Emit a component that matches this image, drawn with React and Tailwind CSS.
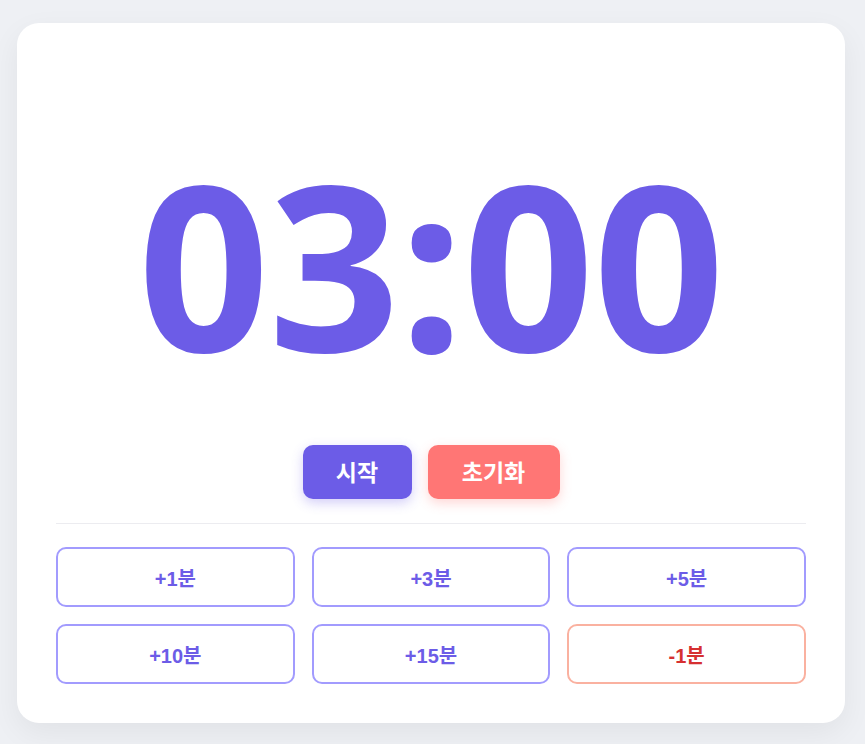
import React from "react";

const presets = [
  { label: "+1분", neg: false },
  { label: "+3분", neg: false },
  { label: "+5분", neg: false },
  { label: "+10분", neg: false },
  { label: "+15분", neg: false },
  { label: "-1분", neg: true },
];

export default function App() {
  return (
    <div
      className="h-[744px] w-full bg-[#eef0f4] pt-[23px] pl-[17px]"
      style={{ fontFamily: '"Noto Sans", "Noto Sans CJK KR", sans-serif' }}
    >
      <div className="w-[828px] h-[700px] bg-white rounded-[22px] shadow-[0_10px_30px_rgba(0,0,0,0.06)] px-[39px] pb-[39px] flex flex-col">
        <div className="flex-1 flex items-center justify-center pt-[58px]">
          <div className="text-[230px] leading-none font-bold text-[#6c5ce7] tracking-[-1px]">
            03:00
          </div>
        </div>
        <div
          className="flex justify-center gap-4"
          style={{ fontFamily: '"Liberation Sans", "Noto Sans CJK KR", sans-serif' }}
        >
          <button className="w-[109px] h-[54px] pt-[3px] rounded-[10px] bg-[#6c5ce7] text-white text-[23px] font-bold shadow-[0_4px_12px_rgba(108,92,231,0.3)]">
            시작
          </button>
          <button className="w-[132px] h-[54px] pt-[3px] rounded-[10px] bg-[#ff7675] text-white text-[23px] font-bold shadow-[0_4px_12px_rgba(255,118,117,0.3)]">
            초기화
          </button>
        </div>
        <div className="mt-6 h-px bg-[#ececf0]" />
        <div
          className="mt-[23px] grid grid-cols-3 gap-x-[17px] gap-y-[17px]"
          style={{ fontFamily: '"Liberation Sans", "Noto Sans CJK KR", sans-serif' }}
        >
          {presets.map((p) => (
            <button
              key={p.label}
              className={
                p.neg
                  ? "h-[60px] pt-[3px] rounded-[10px] border-2 border-[#fab1a0] text-[#d63031] text-[20px] font-bold bg-white"
                  : "h-[60px] pt-[3px] rounded-[10px] border-2 border-[#a29bfe] text-[#6c5ce7] text-[20px] font-bold bg-white"
              }
            >
              {p.label}
            </button>
          ))}
        </div>
      </div>
    </div>
  );
}
